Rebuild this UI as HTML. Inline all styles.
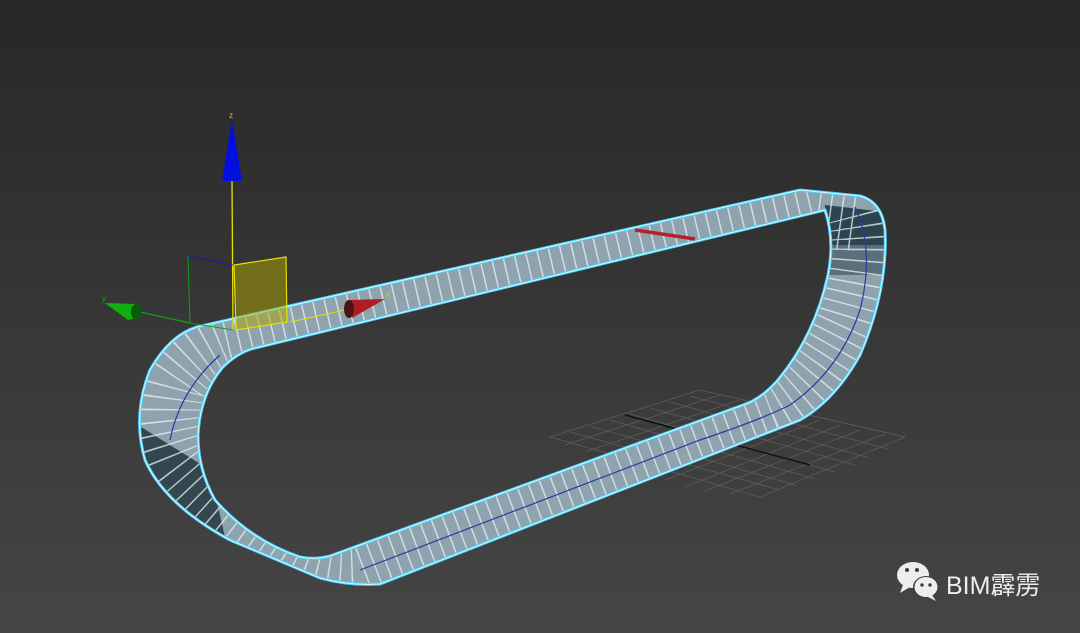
<!DOCTYPE html>
<html><head><meta charset="utf-8"><style>
html,body{margin:0;padding:0;}
body{width:1080px;height:633px;overflow:hidden;background:linear-gradient(#262626,#3a3a3a 60%,#444 100%);position:relative;font-family:"Liberation Sans","Noto Sans CJK SC",sans-serif;}
svg{position:absolute;left:0;top:0;}
.wm{position:absolute;left:946px;top:566px;color:#eee;font-size:25px;letter-spacing:0px;}
</style></head><body>
<svg width="1080" height="633" viewBox="0 0 1080 633">
<defs>
<linearGradient id="bg" x1="0" y1="0" x2="0" y2="1"><stop offset="0" stop-color="#272727"/><stop offset="0.6" stop-color="#3a3a3a"/><stop offset="1" stop-color="#454545"/></linearGradient>
<clipPath id="band"><path id="bp" clip-rule="evenodd" fill-rule="evenodd" d="M197,327 L800,190 L860,196 Q882,202 885,230 Q888,290 860,355 Q835,400 800,420 L380,584 Q350,586 320,578 L230,540 Q165,505 145,460 Q132,415 150,370 Q170,335 197,327 Z
M255,348 L825,210 Q835,240 828,275 Q815,335 778,380 Q760,400 743,405 L330,556 Q315,560 300,557 Q250,540 215,500 Q198,470 198,435 Q200,395 222,368 Q238,352 255,348 Z"/></clipPath>
</defs>
<rect width="1080" height="633" fill="url(#bg)"/>
<g stroke="#5c5c5c" stroke-width="0.8" fill="none">
<path d="M550,437 L700,390 L905,437 L760,497 Z"/>
<path d="M565,445 L720,395 M585,452 L740,400 M605,459 L760,405 M625,466 L780,410 M645,473 L800,415 M665,480 L820,420 M685,487 L840,425 M705,491 L860,430 M730,494 L885,434"/>
<path d="M570,432 L780,490 M590,426 L795,485 M610,420 L815,479 M630,414 L835,472 M650,408 L855,465 M670,402 L870,458 M690,396 L888,449"/>
</g>
<path d="M625,415 L810,465" stroke="#111" stroke-width="1.5"/>
<use href="#bp" fill="#8ea3ae"/>
<g clip-path="url(#band)">
<path d="M825,205 L885,212 L885,245 L825,245 Z" fill="#2c4450"/>
<path d="M825,245 L885,245 L885,275 L825,275Z" fill="#5a6f7a"/>
<path d="M130,420 L210,470 L230,560 L150,520 Z" fill="#33474f"/>
<path d="M226,338 L812,200 L856,206 Q872,250 850,320 Q820,390 772,412 L355,570 Q320,572 290,555 Q210,505 178,460 Q160,420 170,385 Q190,350 226,338" fill="none" stroke="#e8f0f4" stroke-width="90" stroke-dasharray="1.5 10" opacity="0.75"/>
<path d="M855,207 Q875,250 860,310 Q840,370 790,405 Q760,420 700,440 L360,570" fill="none" stroke="#2a3aa0" stroke-width="1.2"/>
<path d="M220,355 Q180,390 170,440" fill="none" stroke="#2a3aa0" stroke-width="1.2"/>
</g>
<use href="#bp" fill="none" stroke="#4fd0f5" stroke-width="3"/>
<use href="#bp" fill="none" stroke="#dff6ff" stroke-width="1"/>
<path d="M635,230 L695,239" stroke="#b3202a" stroke-width="3.5"/>
<path d="M232,180 L233,330" stroke="#e8e000" stroke-width="1.3"/>
<path d="M232,120 L222,181 L242,181 Z" fill="#0010e0"/>
<text x="229" y="118" fill="#d8d000" font-size="8">z</text>
<path d="M234,265 L286,257 L287,322 L236,330 Z" fill="#b0a500" fill-opacity="0.5" stroke="#e8e000" stroke-width="1.2"/>
<path d="M188,256 L233,265" stroke="#1a1ab0" stroke-width="1"/>
<path d="M188,256 L190,323 L233,330" stroke="#10a010" stroke-width="1" fill="none"/>
<path d="M140,312 L190,323" stroke="#10a010" stroke-width="1.2"/>
<path d="M105,303 L136,304 L140,317 L128,320 Z" fill="#10b010"/>
<ellipse cx="136" cy="312" rx="5" ry="8" fill="#0a5a0a"/>
<text x="102" y="301" fill="#10b010" font-size="8">y</text>
<path d="M290,322 L345,310" stroke="#e8e000" stroke-width="1"/>
<path d="M385,299 L348,300 L352,318 Z" fill="#b01c24"/>
<ellipse cx="349" cy="309" rx="5" ry="9" fill="#4a1418"/>
<text x="386" y="297" fill="#d8d000" font-size="8">x</text>
<ellipse cx="913" cy="575" rx="16" ry="13" fill="#eee"/>
<path d="M903,585 L900,593 L910,587 Z" fill="#eee"/>
<ellipse cx="926" cy="587" rx="13" ry="11" fill="#3d3d3d"/>
<ellipse cx="926" cy="587" rx="11.5" ry="10" fill="#eee"/>
<path d="M932,595 L936,601 L928,597 Z" fill="#eee"/>
<circle cx="907" cy="570" r="2" fill="#3d3d3d"/><circle cx="917" cy="570" r="2" fill="#3d3d3d"/>
<circle cx="922" cy="585" r="1.7" fill="#3d3d3d"/><circle cx="930" cy="585" r="1.7" fill="#3d3d3d"/>
</svg>
<div class="wm">BIM霹雳</div>
</body></html>
